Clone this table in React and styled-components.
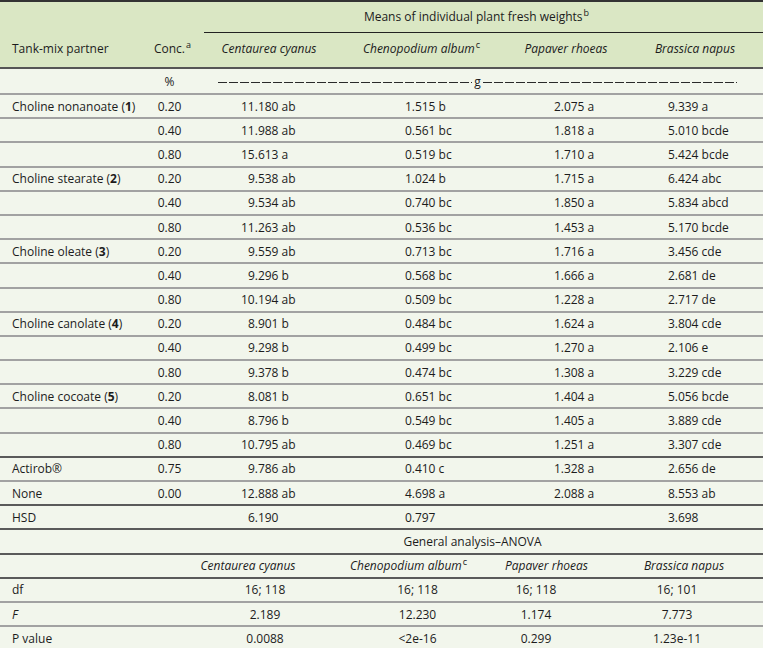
import React from "react";
import styled, { createGlobalStyle } from "styled-components";

const COLS = "145px 55px 138px 167px 122px 136px";
const ROW_H = "24.2px";

const GlobalStyle = createGlobalStyle`
  html, body {
    margin: 0;
    padding: 0;
    background: #f2f6ec;
  }
  body {
    font-family: "Open Sans", "Noto Sans", sans-serif;
    font-size: 12px;
    color: #1c1c1c;
  }
`;

const Table = styled.div`
  width: 763px;
  display: flex;
  flex-direction: column;
  background: #f2f6ec;
`;

const Head = styled.div`
  display: grid;
  grid-template-columns: ${COLS};
  grid-template-rows: 31px 34px;
  background: #dae7c4;
  border-top: 2px solid #333;
  border-bottom: 2px solid #555;
`;

const HeadCell = styled.div`
  grid-column: ${(p) => p.$col};
  grid-row: ${(p) => p.$row || "2"};
  display: flex;
  align-items: ${(p) => (p.$bottom ? "flex-end" : "center")};
  justify-content: ${(p) => (p.$left ? "flex-start" : "center")};
  padding-left: ${(p) => p.$pad || 0}px;
  padding-bottom: ${(p) => (p.$bottom ? 10 : 4)}px;
  font-style: ${(p) => (p.$italic ? "italic" : "normal")};
`;

const MeansCell = styled.div`
  grid-column: 3 / 7;
  grid-row: 1;
  margin-left: 4px;
  display: flex;
  align-items: center;
  justify-content: center;
  border-bottom: 1px solid #222;
  padding-right: 14px;
  padding-bottom: 2px;
`;

const Row = styled.div`
  display: grid;
  grid-template-columns: ${COLS};
  height: ${ROW_H};
  box-sizing: border-box;
  align-items: center;
  border-bottom: 2px solid ${(p) => (p.$strong ? "#5a5a5a" : "#a2a2a2")};
`;

const Cell = styled.div`
  padding-left: ${(p) => p.$pad || 0}px;
  padding-right: ${(p) => p.$shift || 0}px;
  text-align: ${(p) => (p.$center ? "center" : "left")};
  font-style: ${(p) => (p.$italic ? "italic" : "normal")};
  white-space: nowrap;
`;

const WideCell = styled.div`
  grid-column: 3 / 7;
  display: flex;
  align-items: center;
  padding: 0 26px 0 18px;
  gap: 2px;
`;

const Dashes = styled.span`
  flex: 1;
  height: 1px;
  margin-top: 2px;
  background: repeating-linear-gradient(90deg, #2a2a2a 0 9px, transparent 9px 11px);
`;

const SpanCell = styled.div`
  grid-column: 1 / 7;
  text-align: center;
  padding-left: ${(p) => p.$pad || 0}px;
`;

const Sup = styled.sup`
  font-size: 9px;
  line-height: 0;
  vertical-align: 5px;
  margin-left: 1px;
  font-style: normal;
`;

const Ghost = styled.span`
  visibility: hidden;
`;

const Num = styled.b`
  font-weight: 700;
`;

const VAL_PAD = [12, 0, 41, 60, 42, 34];

const groups = [
  ["Choline nonanoate", "1", [
    ["0.20", "11.180 ab", "1.515 b", "2.075 a", "9.339 a"],
    ["0.40", "11.988 ab", "0.561 bc", "1.818 a", "5.010 bcde"],
    ["0.80", "15.613 a", "0.519 bc", "1.710 a", "5.424 bcde"],
  ]],
  ["Choline stearate", "2", [
    ["0.20", "9.538 ab", "1.024 b", "1.715 a", "6.424 abc"],
    ["0.40", "9.534 ab", "0.740 bc", "1.850 a", "5.834 abcd"],
    ["0.80", "11.263 ab", "0.536 bc", "1.453 a", "5.170 bcde"],
  ]],
  ["Choline oleate", "3", [
    ["0.20", "9.559 ab", "0.713 bc", "1.716 a", "3.456 cde"],
    ["0.40", "9.296 b", "0.568 bc", "1.666 a", "2.681 de"],
    ["0.80", "10.194 ab", "0.509 bc", "1.228 a", "2.717 de"],
  ]],
  ["Choline canolate", "4", [
    ["0.20", "8.901 b", "0.484 bc", "1.624 a", "3.804 cde"],
    ["0.40", "9.298 b", "0.499 bc", "1.270 a", "2.106 e"],
    ["0.80", "9.378 b", "0.474 bc", "1.308 a", "3.229 cde"],
  ]],
  ["Choline cocoate", "5", [
    ["0.20", "8.081 b", "0.651 bc", "1.404 a", "5.056 bcde"],
    ["0.40", "8.796 b", "0.549 bc", "1.405 a", "3.889 cde"],
    ["0.80", "10.795 ab", "0.469 bc", "1.251 a", "3.307 cde"],
  ]],
];

const extra = [
  { label: "Actirob®", vals: ["0.75", "9.786 ab", "0.410 c", "1.328 a", "2.656 de"] },
  { label: "None", vals: ["0.00", "12.888 ab", "4.698 a", "2.088 a", "8.553 ab"], strong: true },
  { label: "HSD", vals: ["", "6.190", "0.797", "", "3.698"], strong: true },
];

const anova = [
  { label: "df", vals: ["16; 118", "16; 118", "16; 118", "16; 101"] },
  { label: "F", italic: true, vals: ["2.189", "12.230", "1.174", "7.773"] },
  { label: "P value", vals: ["0.0088", "<2e-16", "0.299", "1.23e-11"], strong: true },
];

// centre offsets for the ANOVA block (header / values)
const ANOVA_HEAD_SHIFT = [42, 26, 54, 22];
const ANOVA_VAL_SHIFT = [8, 8, 60, 36];

const Value = ({ text }) => {
  if (!text) return null;
  return (
    <>
      {text.indexOf(".") === 1 && <Ghost>0</Ghost>}
      {text}
    </>
  );
};

const DataRow = ({ label, num, vals, strong }) => (
  <Row $strong={strong}>
    <Cell $pad={VAL_PAD[0]}>
      {label}
      {num && (
        <>
          {" ("}
          <Num>{num}</Num>
          {")"}
        </>
      )}
    </Cell>
    <Cell $center $shift={6}>{vals[0]}</Cell>
    {vals.slice(1).map((v, i) => (
      <Cell key={i} $pad={VAL_PAD[i + 2]}>
        <Value text={v} />
      </Cell>
    ))}
  </Row>
);

const App = () => {
  return (
    <>
      <GlobalStyle />
      <Table>
        <Head>
          <HeadCell $col="1" $row="1 / 3" $left $bottom $pad={12}>
            Tank-mix partner
          </HeadCell>
          <HeadCell $col="2" $row="1 / 3" $bottom>
            <span>
              Conc.<Sup>a</Sup>
            </span>
          </HeadCell>
          <MeansCell>
            <span>
              Means of individual plant fresh weights<Sup>b</Sup>
            </span>
          </MeansCell>
          <HeadCell $col="3" $italic>Centaurea cyanus</HeadCell>
          <HeadCell $col="4" $italic>
            <span>
              Chenopodium album<Sup>c</Sup>
            </span>
          </HeadCell>
          <HeadCell $col="5" $italic>Papaver rhoeas</HeadCell>
          <HeadCell $col="6" $italic>Brassica napus</HeadCell>
        </Head>

        <Row style={{ height: 26 }}>
          <Cell />
          <Cell $center $shift={6}>%</Cell>
          <WideCell>
            <Dashes />
            <span>g</span>
            <Dashes />
          </WideCell>
        </Row>

        {groups.map(([name, num, rows]) =>
          rows.map((vals, i) => (
            <DataRow
              key={name + i}
              label={i === 0 ? name : ""}
              num={i === 0 ? num : null}
              vals={vals}
              strong={name === "Choline cocoate" && i === 2}
            />
          ))
        )}
        {extra.map((r) => (
          <DataRow key={r.label} label={r.label} vals={r.vals} strong={r.strong} />
        ))}

        <Row $strong>
          <SpanCell $pad={182}>General analysis–ANOVA</SpanCell>
        </Row>

        <Row $strong>
          <Cell />
          <Cell />
          <Cell $center $italic $shift={ANOVA_HEAD_SHIFT[0]}>Centaurea cyanus</Cell>
          <Cell $center $italic $shift={ANOVA_HEAD_SHIFT[1]}>
            Chenopodium album<Sup>c</Sup>
          </Cell>
          <Cell $center $italic $shift={ANOVA_HEAD_SHIFT[2]}>Papaver rhoeas</Cell>
          <Cell $center $italic $shift={ANOVA_HEAD_SHIFT[3]}>Brassica napus</Cell>
        </Row>

        {anova.map((r) => (
          <Row key={r.label} $strong={r.strong}>
            <Cell $pad={12} $italic={r.italic}>{r.label}</Cell>
            <Cell />
            {r.vals.map((v, i) => (
              <Cell key={i} $center $shift={ANOVA_VAL_SHIFT[i]}>{v}</Cell>
            ))}
          </Row>
        ))}
      </Table>
    </>
  );
};

export default App;
